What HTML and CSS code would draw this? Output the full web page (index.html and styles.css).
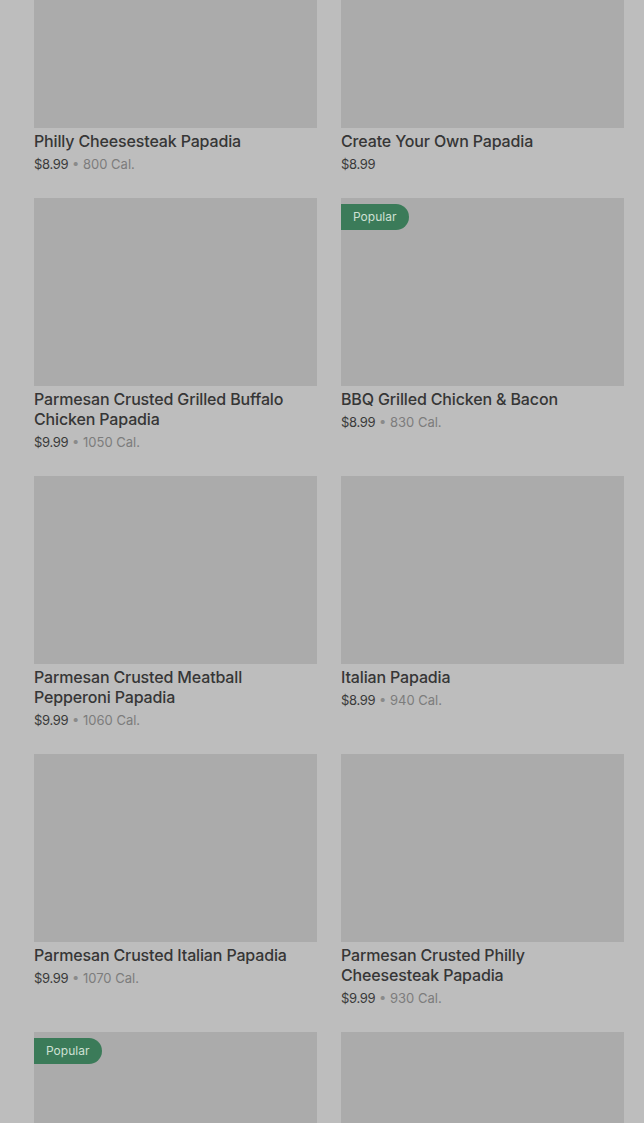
FILE: index.html
```html
<!DOCTYPE html>
<html>
<head>
<meta charset="utf-8">
<link rel="stylesheet" href="styles.css">
</head>
<body>
<div class="grid">
  <div class="card"><div class="img"></div><div class="title">Philly Cheesesteak Papadia</div><div class="meta"><span class="price">$8.99</span> • <span class="cal">800 Cal.</span></div></div>
  <div class="card"><div class="img"></div><div class="title">Create Your Own Papadia</div><div class="meta"><span class="price">$8.99</span></div></div>
  <div class="card"><div class="img"></div><div class="title">Parmesan Crusted Grilled Buffalo Chicken Papadia</div><div class="meta"><span class="price">$9.99</span> • <span class="cal">1050 Cal.</span></div></div>
  <div class="card"><div class="img"><span class="badge">Popular</span></div><div class="title">BBQ Grilled Chicken &amp; Bacon</div><div class="meta"><span class="price">$8.99</span> • <span class="cal">830 Cal.</span></div></div>
  <div class="card"><div class="img"></div><div class="title">Parmesan Crusted Meatball Pepperoni Papadia</div><div class="meta"><span class="price">$9.99</span> • <span class="cal">1060 Cal.</span></div></div>
  <div class="card"><div class="img"></div><div class="title">Italian Papadia</div><div class="meta"><span class="price">$8.99</span> • <span class="cal">940 Cal.</span></div></div>
  <div class="card"><div class="img"></div><div class="title">Parmesan Crusted Italian Papadia</div><div class="meta"><span class="price">$9.99</span> • <span class="cal">1070 Cal.</span></div></div>
  <div class="card"><div class="img"></div><div class="title">Parmesan Crusted Philly Cheesesteak Papadia</div><div class="meta"><span class="price">$9.99</span> • <span class="cal">930 Cal.</span></div></div>
  <div class="card"><div class="img"><span class="badge">Popular</span></div></div>
  <div class="card"><div class="img"></div></div>
</div>
</body>
</html>
```
FILE: styles.css
```css
html, body {
  margin: 0;
  padding: 0;
  background: #bdbdbd;
  overflow: hidden;
  height: 1123px;
}
body {
  font-family: Inter, "Noto Sans", sans-serif;
  color: #333;
}
.grid {
  display: grid;
  grid-template-columns: 283px 283px;
  column-gap: 24px;
  row-gap: 24px;
  padding: 0 20px 0 34px;
  margin-top: -60px;
}
.card {
  display: flex;
  flex-direction: column;
}
.img {
  position: relative;
  height: 188px;
  background: #ababab;
}
.badge {
  position: absolute;
  left: 0;
  top: 6px;
  height: 26px;
  line-height: 26px;
  padding: 0 13px 0 12px;
  background: #3b7b59;
  color: #cfe0d4;
  font-size: 12px;
  border-radius: 0 13px 13px 0;
}
.title {
  margin-top: 3px;
  font-size: 16px;
  line-height: 20px;
  font-weight: 500;
  color: #363636;
  letter-spacing: -0.15px;
}
.meta {
  margin-top: 3px;
  font-size: 13px;
  line-height: 20px;
  color: #8a8a8a;
}
.price {
  color: #3a3a3a;
  letter-spacing: -0.3px;
}
.cal {
  color: #7c7c7c;
}
```
